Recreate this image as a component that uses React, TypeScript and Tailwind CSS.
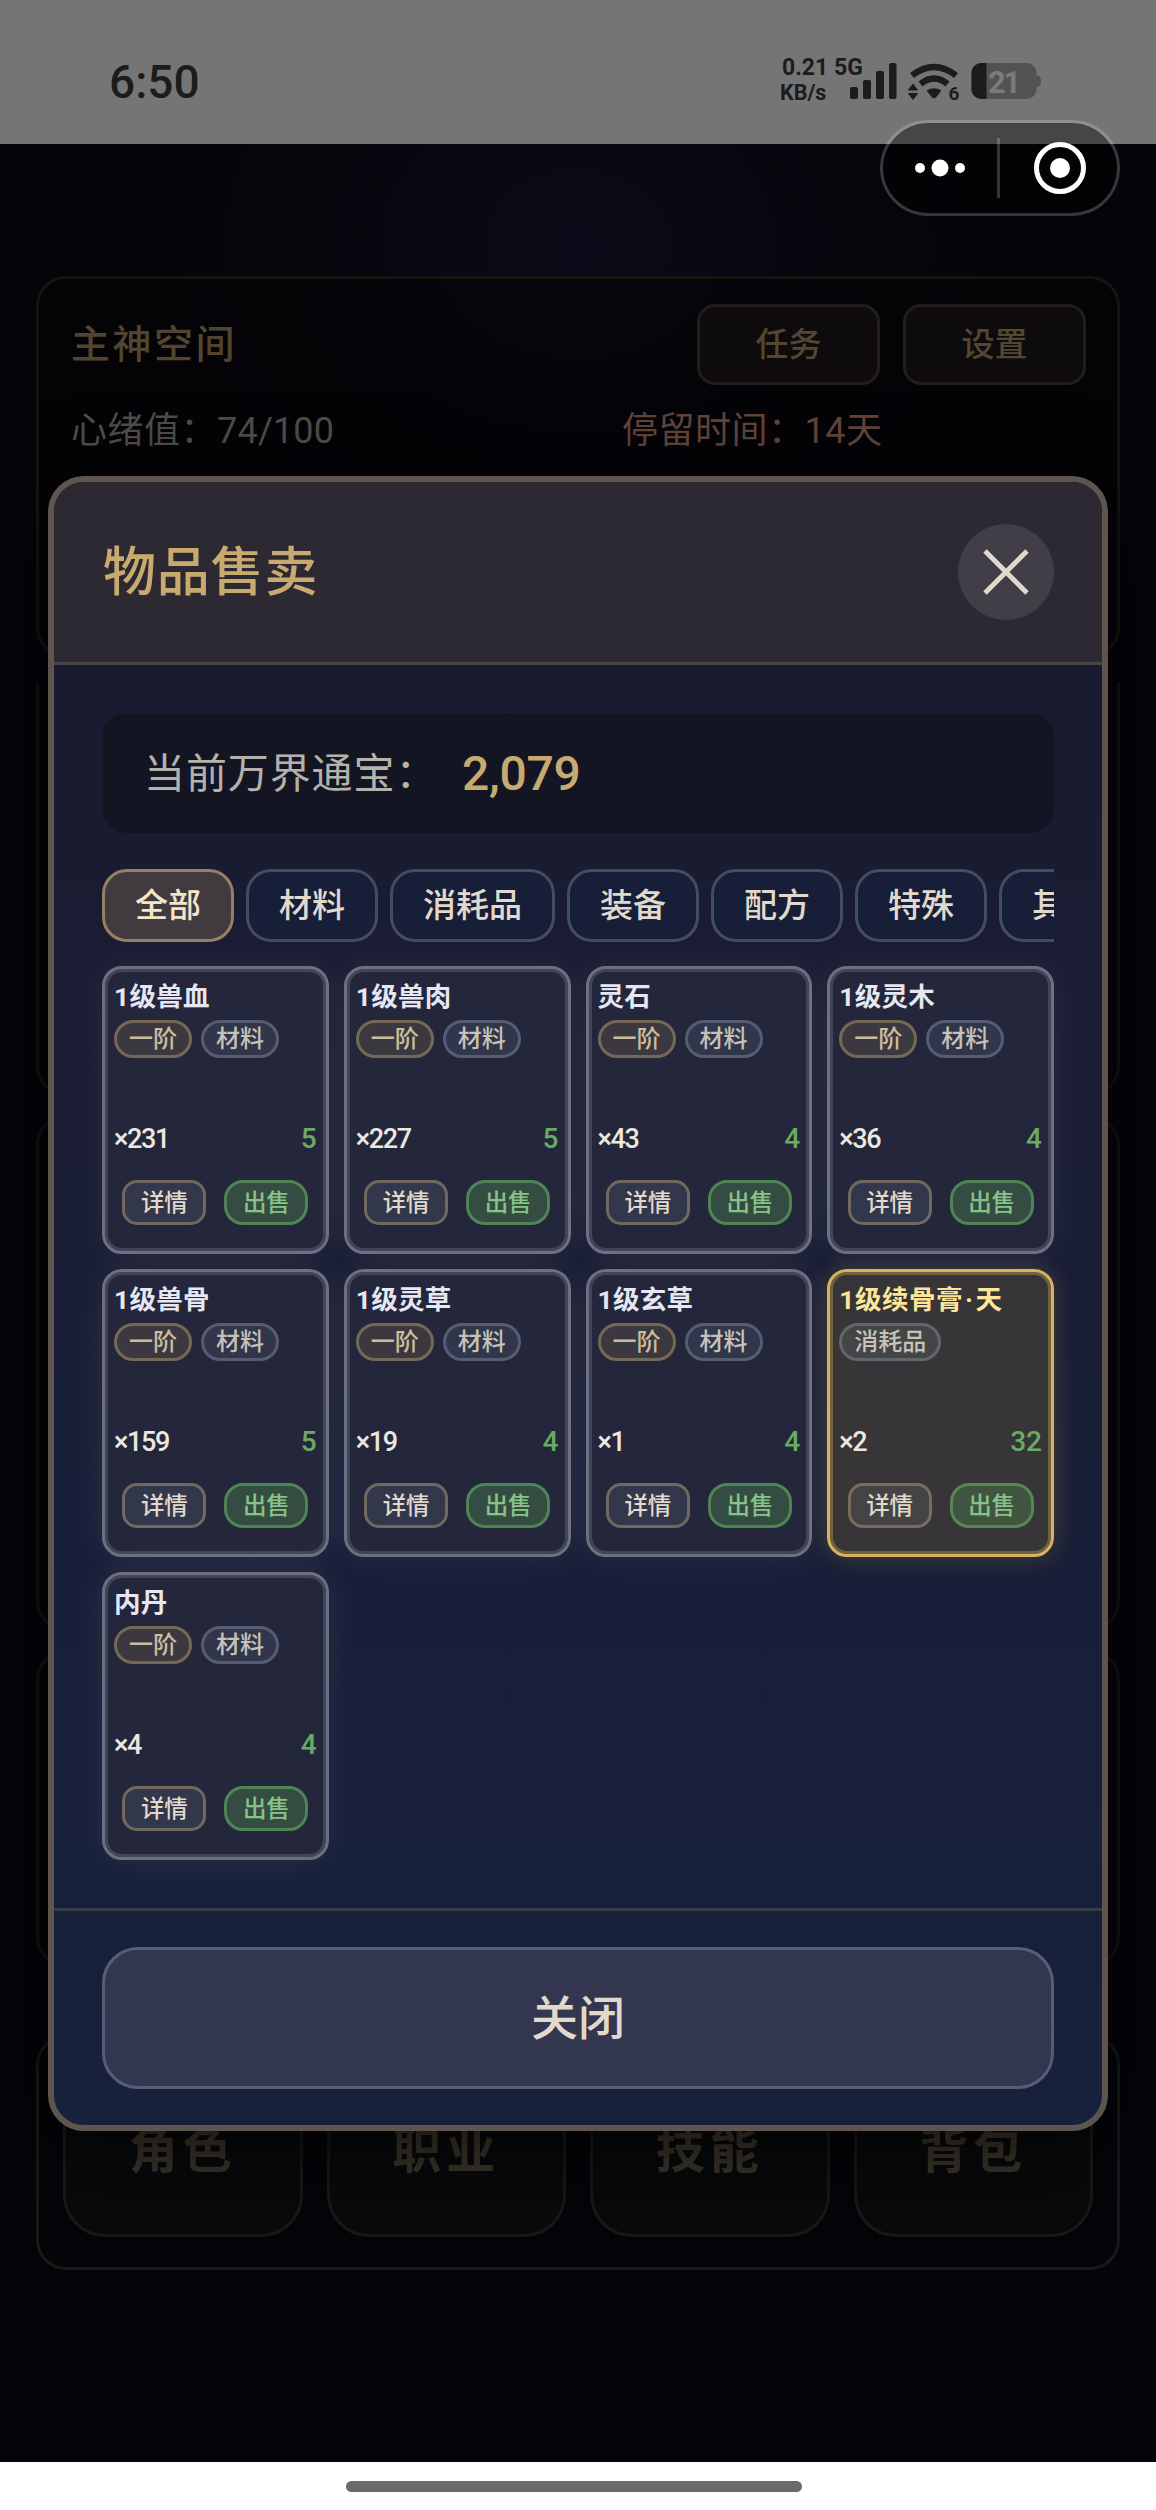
type Item = { name: string; tier?: string; kind: string; qty: number; price: number; gold?: boolean };

const items: Item[] = [
  { name: '1级兽血', tier: '一阶', kind: '材料', qty: 231, price: 5 },
  { name: '1级兽肉', tier: '一阶', kind: '材料', qty: 227, price: 5 },
  { name: '灵石', tier: '一阶', kind: '材料', qty: 43, price: 4 },
  { name: '1级灵木', tier: '一阶', kind: '材料', qty: 36, price: 4 },
  { name: '1级兽骨', tier: '一阶', kind: '材料', qty: 159, price: 5 },
  { name: '1级灵草', tier: '一阶', kind: '材料', qty: 19, price: 4 },
  { name: '1级玄草', tier: '一阶', kind: '材料', qty: 1, price: 4 },
  { name: '1级续骨膏·天', kind: '消耗品', qty: 2, price: 32, gold: true },
  { name: '内丹', tier: '一阶', kind: '材料', qty: 4, price: 4 },
];

const tabs = ['全部', '材料', '消耗品', '装备', '配方', '特殊', '其他'];
const nav = ['角色', '职业', '技能', '背包'];

function StatusBar() {
  return (
    <header className="flex h-[144px] shrink-0 items-start justify-between bg-[#757575] pl-[109px] pr-[114px] text-[#1c1c1c]">
      <div className="mt-[55px] text-[46px] leading-[54px] font-medium">6:50</div>
      <div className="mt-[54px] flex">
        <div className="w-[70px] whitespace-nowrap">
          <div className="pl-[2px] text-[23px] leading-[27px] font-bold">0.21 5G</div>
          <div className="text-[21.500px] leading-[24px] font-bold">KB/s</div>
        </div>
        <svg className="mt-[8px] h-[40px] w-[192px] overflow-visible" viewBox="0 0 192 40" fill="none">
          <g fill="#1c1c1c">
            <rect x="0" y="25" width="8" height="12" rx="2" />
            <rect x="13" y="18" width="8" height="19" rx="2" />
            <rect x="26" y="9" width="8" height="28" rx="2" />
            <rect x="39" y="1" width="7.500" height="36" rx="2" />
            <path d="M76.500 28.500Q84 24 91.500 28.500L86 35.500Q84 37 82 35.500Z" />
            <path d="M58.500 28L63 22L67.500 28ZM58.500 31.500L63 37.500L67.500 31.500Z" stroke="#1c1c1c" strokeWidth="1" strokeLinejoin="round" />
          </g>
          <g stroke="#1c1c1c" strokeWidth="6.500">
            <path d="M62 13.500Q84 -3.500 106 13.500" />
            <path d="M70.500 22Q84 11 97.500 22" />
          </g>
          <text x="98.500" y="38" fill="#1c1c1c" fontSize="19" fontWeight="700">6</text>
          <path d="M132 1H176A10 10 0 0 1 186.500 11V13Q191 13.500 191 19T186.500 25V27A10 10 0 0 1 176 37H132A10 10 0 0 1 121.500 27V11A10 10 0 0 1 132 1Z" fill="#525252" />
          <path d="M136.500 1H132A10 10 0 0 0 121.500 11V27A10 10 0 0 0 132 37H136.500Z" fill="#1c1c1c" />
          <text x="138" y="31" fill="#7b7b7b" fontSize="31" fontWeight="700" textLength="33">21</text>
        </svg>
      </div>
    </header>
  );
}

function Capsule() {
  return (
    <div className="absolute top-[120px] left-[880px] flex h-[96px] w-[240px] items-center rounded-full border-[3px] border-white/20 bg-black/40 bg-clip-padding">
      <svg className="h-[90px] w-[234px]" viewBox="883 123 234 90" fill="none">
        <g fill="#fff">
          <circle cx="920" cy="168" r="5" />
          <circle cx="940" cy="168" r="8.500" />
          <circle cx="960" cy="168" r="5" />
          <circle cx="1060" cy="168" r="10" />
        </g>
        <rect x="997" y="138" width="3" height="60" fill="#fff" fillOpacity="0.2" />
        <circle cx="1060" cy="168" r="23.500" stroke="#fff" strokeWidth="5" />
      </svg>
    </div>
  );
}

function Backdrop() {
  return (
    <div className="flex h-[2318px] shrink-0 flex-col bg-[#050409] bg-[radial-gradient(ellipse_420px_330px_at_50%_100px,#0d0a19_0%,#08070f_50%,transparent_100%)] px-[36px] pt-[132px]">
      <section className="h-[381px] rounded-[30px] border-[3px] border-[#17140f] bg-[#030305]/60 px-[33px] pt-[25px]">
        <div className="flex h-[81px] items-center">
          <h1 className="-ml-[1px] flex-1 text-[39px] leading-[60px] font-medium tracking-[2.500px] text-[#52452f]">主神空间</h1>
          <div className="-mr-[2px] flex gap-[23px]">
            {['任务', '设置'].map((t) => (
              <button key={t} className="h-[81px] w-[183px] rounded-[18px] border-[3px] border-[#221e17] bg-[#0d0b0b] text-[33px] leading-[40px] font-medium text-[#534731]">
                {t}
              </button>
            ))}
          </div>
        </div>
        <div className="mt-[19px] -ml-[1px] flex text-[36px] leading-[54px] tracking-[0.500px]">
          <div className="w-[551px] text-[#4d4d4b]">
            心绪值：<span className="tracking-[0.200px]">74/100</span>
          </div>
          <div className="text-[#62443a]">停留时间：14天</div>
        </div>
      </section>
      <section className="mt-[25px] h-[414px] rounded-b-[30px] border-[3px] border-t-0 border-[#141311]" />
      <section className="mt-[19px] h-[516px] rounded-[30px] border-[3px] border-[#141311]" />
      <section className="mt-[19px] h-[317px] rounded-[30px] border-[3px] border-[#141311]" />
      <section className="mt-[68px] flex h-[235px] gap-[24px] rounded-[30px] border-[3px] border-[#1b1916] bg-[#040509] p-[24px] pb-[30px]">
        {nav.map((n) => (
          <button key={n} className="flex flex-1 items-center justify-center rounded-[42px] border-[3px] border-[#1b1916] bg-[#090a0c] pt-[5px] text-[49px] leading-[60px] font-bold text-[#403a2e]">
            <span className="tracking-[5px]">{n}</span>
          </button>
        ))}
      </section>
    </div>
  );
}

function ItemCard({ item }: { item: Item }) {
  return (
    <article
      className={
        item.gold
          ? 'flex h-[288px] flex-col rounded-[20px] border-[3px] border-[#d8b35f] bg-[#373538] p-[9px] shadow-[inset_0_0_0_3px_#71623f,0_0_24px_rgba(230,190,90,0.22)]'
          : 'flex h-[288px] flex-col rounded-[20px] border-[3px] border-[#6d7081] bg-[#24273c] p-[9px] shadow-[inset_0_0_0_3px_#424558,0_0_36px_rgba(255,255,255,0.07)]'
      }
    >
      <h3 className={item.gold ? 'h-[42px] text-[26.500px] leading-[38px] font-bold whitespace-nowrap tracking-[0.500px] text-[#fce69a]' : 'h-[42px] text-[26.500px] leading-[38px] font-bold whitespace-nowrap tracking-[0.300px] text-[#e6e7f2]'}>
        {item.gold ? (
          <>
            1级续骨膏<span className="mx-[2px]">·</span>天
          </>
        ) : (
          item.name
        )}
      </h3>
      <div className="flex gap-[9px]">
        {item.tier && (
          <span className="flex h-[38px] items-center rounded-full border-[3px] border-[#766856] bg-[#3b383f] px-[12px] text-[24px] leading-[30px] font-medium text-[#cbbd9f]">{item.tier}</span>
        )}
        <span className={item.gold ? 'flex h-[38px] items-center rounded-full border-[3px] border-[#626569] bg-[#444547] px-[12px] text-[24px] leading-[30px] font-medium text-[#c6c2b9]' : 'flex h-[38px] items-center rounded-full border-[3px] border-[#555d73] bg-[#32364b] px-[12px] text-[24px] leading-[30px] font-medium text-[#c6c2b9]'}>
          {item.kind}
        </span>
      </div>
      <div className="mt-[63px] flex h-[36px] items-center justify-between">
        <span className="text-[27px] leading-[36px] font-medium tracking-[-1.400px] text-[#ece7df]">×{item.qty}</span>
        <span className="text-[28px] leading-[36px] font-medium text-[#69ab61]">{item.price}</span>
      </div>
      <div className="mt-[23px] flex justify-center gap-[18px]">
        <button className={item.gold ? 'h-[45px] w-[84px] rounded-[15px] border-[3px] border-[#7a6c5e] bg-[#444447] text-[23.500px] leading-[36px] font-medium text-[#e2d9cb]' : 'h-[45px] w-[84px] rounded-[15px] border-[3px] border-[#716860] bg-[#33374c] text-[23.500px] leading-[36px] font-medium text-[#e2d9cb]'}>详情</button>
        <button className={item.gold ? 'h-[45px] w-[84px] rounded-[19px] border-[3px] border-[#578752] bg-[#41543f] text-[23.500px] leading-[36px] font-medium text-[#87c387]' : 'h-[45px] w-[84px] rounded-[19px] border-[3px] border-[#4f8454] bg-[#344c41] text-[23.500px] leading-[36px] font-medium text-[#87c387]'}>出售</button>
      </div>
    </article>
  );
}

function SellDialog() {
  return (
    <div className="absolute top-[476px] left-[48px] flex h-[1655px] w-[1060px] flex-col overflow-hidden rounded-[36px] border-[6px] border-[#5e564e] bg-linear-to-b from-[#1a1a2e] to-[#17213d] bg-origin-border shadow-[0_24px_90px_rgba(0,0,0,0.7)]">
      <div className="flex h-[183px] shrink-0 items-center justify-between border-b-[3px] border-[#484344] bg-[#2c2933] px-[48px]">
        <h2 className="pt-[1px] pl-[1px] text-[53px] leading-[72px] font-medium tracking-[0.800px] text-[#c8aa70]">物品售卖</h2>
        <button className="flex size-[96px] items-center justify-center rounded-full bg-[#413e48]">
          <svg className="size-[48px]" viewBox="0 0 48 48" stroke="#e2d9cd" strokeWidth="4.800">
            <path d="M3 3L45 45M45 3L3 45" />
          </svg>
        </button>
      </div>
      <div className="flex flex-1 flex-col p-[48px]">
        <div className="flex h-[120px] shrink-0 items-center rounded-[24px] bg-[#141523] px-[42px] pt-[2px]">
          <span className="w-[318px] text-[41px] leading-[60px] tracking-[0.900px] whitespace-nowrap text-[#b5b1ab]">当前万界通宝：</span>
          <span className="text-[48px] leading-[60px] font-medium tracking-[-0.300px] text-[#c8aa70]">2,079</span>
        </div>
        <div className="mt-[36px] flex h-[73px] shrink-0 gap-[12px] overflow-hidden">
          {tabs.map((t, i) => (
            <button
              key={t}
              className={
                i === 0
                  ? 'shrink-0 rounded-[25px] border-[3px] border-[#958160] bg-[#413a3e] px-[30px] text-[33px] leading-[48px] font-medium text-[#f3e5c6]'
                  : 'shrink-0 rounded-[25px] border-[3px] border-[#444d60] bg-[#171f38] px-[30px] text-[33px] leading-[48px] font-medium text-[#e1d9cb]'
              }
            >
              {t}
            </button>
          ))}
        </div>
        <div className="mt-[24px] grid grid-cols-4 gap-[15px]">
          {items.map((it) => (
            <ItemCard key={it.name} item={it} />
          ))}
        </div>
      </div>
      <div className="h-[217px] shrink-0 border-t-[3px] border-[#3a3c48] px-[48px] py-[36px]">
        <button className="h-[142px] w-full rounded-[36px] border-[3px] border-[#595d73] bg-[#32364f] pt-[1px] text-[47px] leading-[60px] font-medium text-[#e2d9cb]">关闭</button>
      </div>
    </div>
  );
}

export default function App() {
  return (
    <div className="relative flex h-[2510px] w-[1156px] flex-col overflow-hidden bg-white [font-family:Roboto,'Noto_Sans_CJK_SC',sans-serif]">
      <StatusBar />
      <Backdrop />
      <div className="flex flex-1 items-start pt-[19px] pl-[346px]">
        <div className="h-[11px] w-[456px] rounded-full bg-[#6a6a6a]" />
      </div>
      <SellDialog />
      <Capsule />
    </div>
  );
}
